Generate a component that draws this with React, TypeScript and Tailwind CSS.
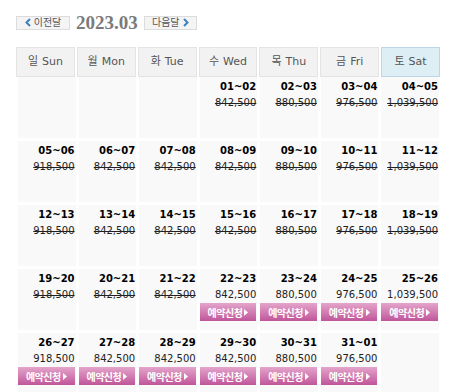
import React from 'react';

type Day = { date: string; price: string; sold?: boolean };

const heads = [
  { ko: '일', en: 'Sun' },
  { ko: '월', en: 'Mon' },
  { ko: '화', en: 'Tue' },
  { ko: '수', en: 'Wed' },
  { ko: '목', en: 'Thu' },
  { ko: '금', en: 'Fri' },
  { ko: '토', en: 'Sat' },
];

const P = ['918,500', '842,500', '842,500', '842,500', '880,500', '976,500', '1,039,500'];

const row = (dates: string[], sold: boolean, start = 0): (Day | null)[] => {
  const cells: (Day | null)[] = [];
  for (let i = 0; i < start; i++) cells.push(null);
  dates.forEach((d, i) => cells.push({ date: d, price: P[start + i], sold }));
  while (cells.length < 7) cells.push(null);
  return cells;
};

const weeks: (Day | null)[][] = [
  row(['01~02', '02~03', '03~04', '04~05'], true, 3),
  row(['05~06', '06~07', '07~08', '08~09', '09~10', '10~11', '11~12'], true),
  row(['12~13', '13~14', '14~15', '15~16', '16~17', '17~18', '18~19'], true),
  row(['19~20', '20~21', '21~22'], true).slice(0, 3).concat(
    [
      { date: '22~23', price: '842,500' },
      { date: '23~24', price: '880,500' },
      { date: '24~25', price: '976,500' },
      { date: '25~26', price: '1,039,500' },
    ]
  ),
  [
    { date: '26~27', price: '918,500' },
    { date: '27~28', price: '842,500' },
    { date: '28~29', price: '842,500' },
    { date: '29~30', price: '842,500' },
    { date: '30~31', price: '880,500' },
    { date: '31~01', price: '976,500' },
    null,
  ],
];

const Chevron = ({ dir }: { dir: 'l' | 'r' }) => (
  <svg width="6" height="9" viewBox="0 0 6 9">
    <path
      d={dir === 'l' ? 'M5 1 L1.5 4.5 L5 8' : 'M1 1 L4.5 4.5 L1 8'}
      fill="none"
      stroke="#3b82c4"
      strokeWidth="2"
    />
  </svg>
);

function Cell({ day }: { day: Day | null }) {
  return (
    <div className="h-[61px] bg-[#f9f9f9] pt-[2px] pr-[1px] text-right">
      {day && (
        <>
          <div className="text-[10px] leading-[16px] font-bold text-black">{day.date}</div>
          <div className={'text-[10px] leading-[16px] text-[#222] ' + (day.sold ? 'line-through' : '')}>
            {day.price}
          </div>
          {!day.sold && (
            <button className="flex h-[18px] w-full items-center justify-center gap-[2px] bg-gradient-to-b from-[#e3a4cb] to-[#c0559a] text-[10px] font-bold tracking-[-0.5px] text-white [font-family:'Noto_Sans_CJK_KR',sans-serif]">
              예약신청
              <svg width="4" height="7" viewBox="0 0 4 7">
                <path d="M0 0 L4 3.5 L0 7 Z" fill="#fff" />
              </svg>
            </button>
          )}
        </>
      )}
    </div>
  );
}

export default function App() {
  return (
    <div className="h-[392px] w-[457px] bg-white pl-4 pt-[13px] [font-family:'DejaVu_Sans','Noto_Sans_CJK_KR',sans-serif]">
      <div className="flex items-center">
        <button className="flex h-[14px] w-[54px] items-center justify-center gap-[3px] border border-[#dcdcdc] bg-[#f4f4f4] text-[10px] leading-none text-[#555]">
          <Chevron dir="l" />
          이전달
        </button>
        <span className="mx-[6px] text-[19px] leading-none font-bold text-[#7b7b7b] [font-family:'Liberation_Serif',serif]">
          2023.03
        </span>
        <button className="flex h-[14px] w-[53px] items-center justify-center gap-[3px] border border-[#dcdcdc] bg-[#f4f4f4] text-[10px] leading-none text-[#555]">
          다음달
          <Chevron dir="r" />
        </button>
      </div>

      <div className="mt-[15px] grid w-[424px] grid-cols-7 gap-[2px]">
        {heads.map((h, i) => (
          <div
            key={h.en}
            className={
              'flex h-[30px] items-center justify-center gap-[4px] border text-[11px] text-[#555] ' +
              (i === 6 ? 'border-[#b9d7e6] bg-[#ddeef4]' : 'border-[#e4e4e4] bg-[#f2f2f2]')
            }
          >
            <span>{h.ko}</span>
            <span>{h.en}</span>
          </div>
        ))}
      </div>

      <div className="ml-[2px] grid w-[421px] grid-cols-7 gap-[3px]">
        {weeks.flat().map((d, i) => (
          <Cell key={i} day={d} />
        ))}
      </div>
    </div>
  );
}
